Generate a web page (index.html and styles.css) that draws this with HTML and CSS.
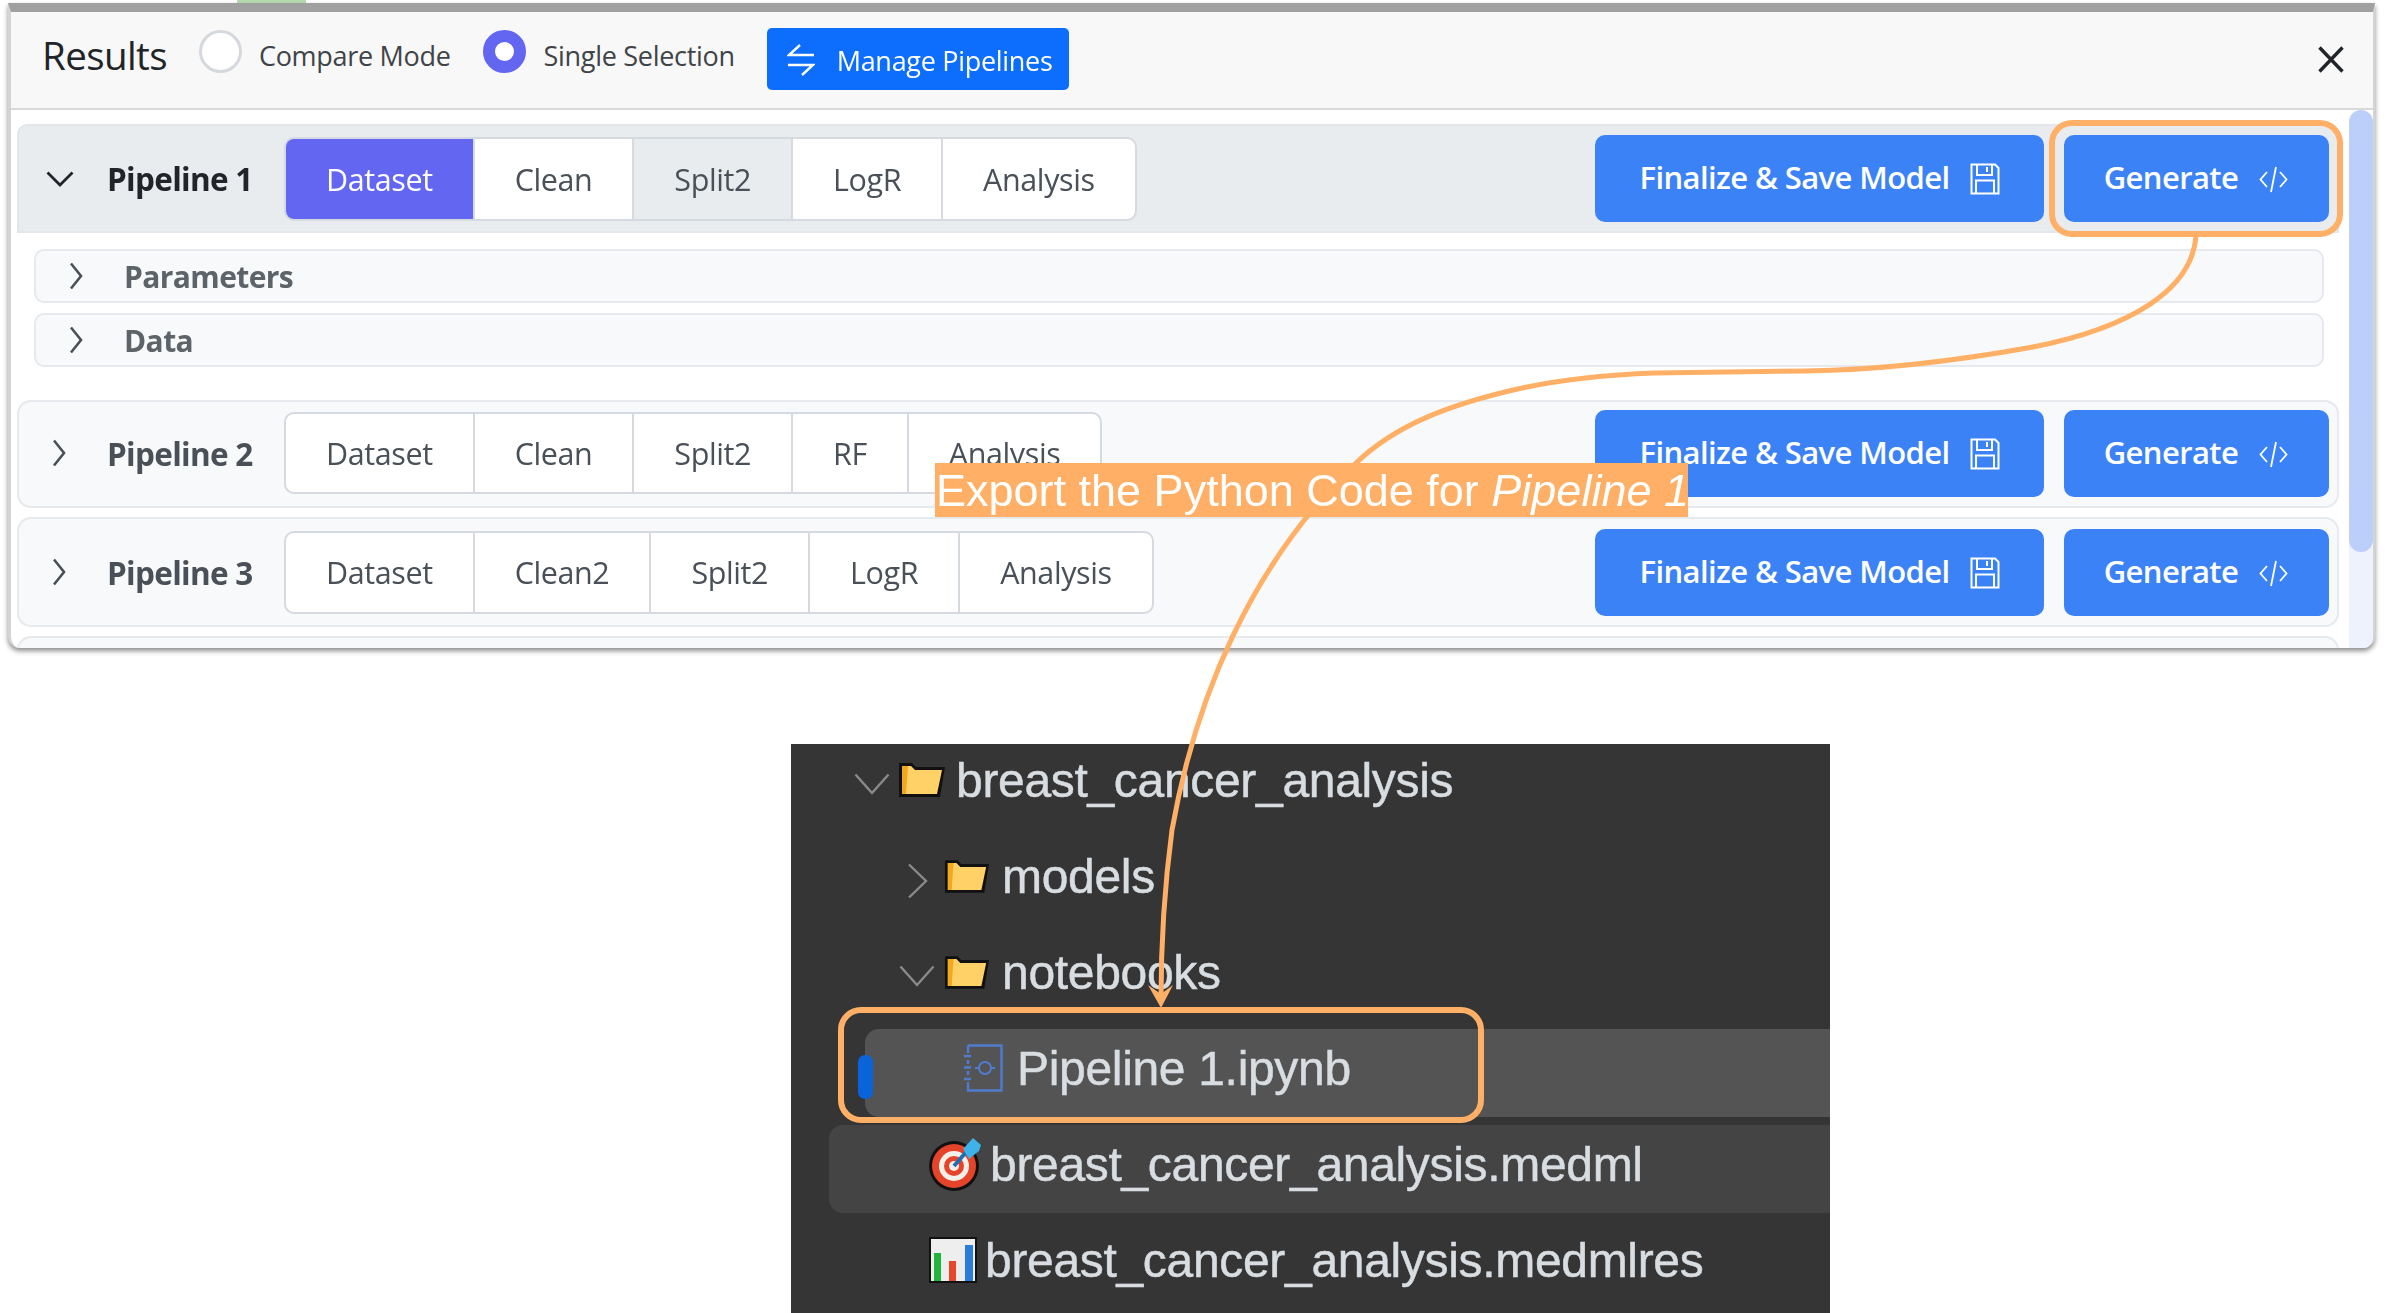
FILE: index.html
```html
<!DOCTYPE html>
<html lang="en">
<head>
<meta charset="utf-8">
<title>Results</title>
<link rel="stylesheet" href="styles.css">
</head>
<body>
<svg width="0" height="0" class="defs">
  <defs>
    <symbol id="save" viewBox="0 0 30 32"><path d="M1.5 1.5H25L28.5 5V30.5H1.5Z M7 1.5V12H22V1.5 M17 4V9 M6 30.5V17.5H24V30.5" fill="none" stroke="currentColor" stroke-width="2"/></symbol>
    <symbol id="code" viewBox="0 0 31 32"><path d="M9 9L2.5 16.5L9 24 M22 9L28.5 16.5L22 24 M18 4L13 29" fill="none" stroke="currentColor" stroke-width="1.8"/></symbol>
    <symbol id="chev-right" viewBox="0 0 14 28"><path d="M2 1.5L12 14L2 26.5" fill="none" stroke="currentColor" stroke-width="2.6"/></symbol>
    <symbol id="folder" viewBox="0 0 48 36"><path d="M1 1H14L18 5H47L42 35H1Z" fill="#111"/><path d="M4 4H13L17 8H44L39 32H4Z" fill="#ffd166"/><path d="M4 4H10L8 32H4Z" fill="#f2a81d"/></symbol>
  </defs>
</svg>

<div class="top-strip"><span class="top-tab"></span></div>
<section class="panel">
  <header class="panel-head">
    <h1 class="title">Results</h1>
    <label class="radio"><span class="dot"></span>Compare Mode</label>
    <label class="radio radio-second"><span class="dot dot-on"></span>Single Selection</label>
    <button class="manage">
      <svg class="manage-icon" viewBox="0 0 28 32"><path d="M13 1L2 11H27 M15 31L26 21H1" fill="none" stroke="currentColor" stroke-width="2.4"/></svg>
      Manage Pipelines
    </button>
    <svg class="close" viewBox="0 0 26 27"><path d="M1.5 1.5L24.5 25.5M24.5 1.5L1.5 25.5" fill="none" stroke="currentColor" stroke-width="3.4"/></svg>
  </header>
  <div class="panel-body">
    <div class="list">
      <article class="pipe pipe-open">
        <svg class="chev-down" viewBox="0 0 28 16"><path d="M1.5 1.5L14 14L26.5 1.5" fill="none" stroke="currentColor" stroke-width="2.8"/></svg>
        <span class="pipe-name">Pipeline 1</span>
        <div class="tabs">
          <span class="tab tab-active">Dataset</span><span class="tab">Clean</span><span class="tab tab-grey">Split2</span><span class="tab">LogR</span><span class="tab">Analysis</span>
        </div>
        <div class="actions">
          <button class="btn btn-save">Finalize &amp; Save Model<svg class="ico-save"><use href="#save"/></svg></button>
          <button class="btn btn-gen">Generate<svg class="ico-code"><use href="#code"/></svg></button>
        </div>
      </article>
      <div class="sub sub-first"><svg class="chev-sub"><use href="#chev-right"/></svg>Parameters</div>
      <div class="sub"><svg class="chev-sub"><use href="#chev-right"/></svg>Data</div>
      <article class="pipe pipe-two">
        <svg class="chev-right"><use href="#chev-right"/></svg>
        <span class="pipe-name">Pipeline 2</span>
        <div class="tabs">
          <span class="tab">Dataset</span><span class="tab">Clean</span><span class="tab">Split2</span><span class="tab">RF</span><span class="tab">Analysis</span>
        </div>
        <div class="actions">
          <button class="btn btn-save">Finalize &amp; Save Model<svg class="ico-save"><use href="#save"/></svg></button>
          <button class="btn btn-gen">Generate<svg class="ico-code"><use href="#code"/></svg></button>
        </div>
      </article>
      <article class="pipe pipe-three">
        <svg class="chev-right"><use href="#chev-right"/></svg>
        <span class="pipe-name">Pipeline 3</span>
        <div class="tabs">
          <span class="tab">Dataset</span><span class="tab">Clean2</span><span class="tab">Split2</span><span class="tab">LogR</span><span class="tab">Analysis</span>
        </div>
        <div class="actions">
          <button class="btn btn-save">Finalize &amp; Save Model<svg class="ico-save"><use href="#save"/></svg></button>
          <button class="btn btn-gen">Generate<svg class="ico-code"><use href="#code"/></svg></button>
        </div>
      </article>
      <div class="pipe-stub"></div>
    </div>
    <div class="track"><div class="thumb"></div></div>
  </div>
</section>

<section class="tree">
  <div class="row row-root">
    <svg class="tree-chev-down" viewBox="0 0 36 22"><path d="M1.5 1.5L18 20L34.5 1.5" fill="none" stroke="currentColor" stroke-width="2.4"/></svg>
    <svg class="folder"><use href="#folder"/></svg>
    <span>breast_cancer_analysis</span>
  </div>
  <div class="row row-sub">
    <span class="chev-slot"><svg class="tree-chev-right" viewBox="0 0 21 36"><path d="M2 1.5L19 18L2 34.5" fill="none" stroke="currentColor" stroke-width="2.4"/></svg></span>
    <svg class="folder folder-sm"><use href="#folder"/></svg>
    <span>models</span>
  </div>
  <div class="row row-sub">
    <span class="chev-slot"><svg class="tree-chev-down" viewBox="0 0 36 22"><path d="M1.5 1.5L18 20L34.5 1.5" fill="none" stroke="currentColor" stroke-width="2.4"/></svg></span>
    <svg class="folder folder-sm"><use href="#folder"/></svg>
    <span>notebooks</span>
  </div>
  <div class="row row-selected">
    <span class="indicator"></span>
    <svg class="nb" viewBox="0 0 39 48"><path d="M4 1.5H37.5V46.5H4V38 M4 31V27 M4 20V16 M4 9V1.5" fill="none" stroke="#4f7cd0" stroke-width="2.4"/><path d="M0 12H7M0 23.5H7M0 35H7" stroke="#4f7cd0" stroke-width="2.4"/><circle cx="21" cy="24" r="6" fill="none" stroke="#4f7cd0" stroke-width="2"/><path d="M11 24H15M27 24H31" stroke="#4f7cd0" stroke-width="2"/></svg>
    <span>Pipeline 1.ipynb</span>
  </div>
  <div class="row row-hover">
    <svg class="target" viewBox="0 0 52 54"><circle cx="25" cy="29" r="25" fill="#111"/><circle cx="25" cy="29" r="22" fill="#e5432a"/><circle cx="25" cy="29" r="15" fill="#f3efe9"/><circle cx="25" cy="29" r="10" fill="#e5432a"/><circle cx="25" cy="29" r="5" fill="#f3efe9"/><path d="M25 29L38 14" stroke="#1f6fb5" stroke-width="4"/><path d="M34 12L44 1L52 8L50 14L40 22Z" fill="#3fb2ea"/></svg>
    <span>breast_cancer_analysis.medml</span>
  </div>
  <div class="row row-plain">
    <svg class="chart" viewBox="0 0 48 46"><rect width="48" height="46" fill="#111"/><rect x="2" y="2" width="44" height="42" fill="#eeeeee"/><rect x="5" y="16" width="7" height="28" fill="#22b33c"/><rect x="20" y="24" width="7" height="20" fill="#e8472b"/><rect x="36" y="8" width="8" height="36" fill="#2a7dd8"/></svg>
    <span>breast_cancer_analysis.medmlres</span>
  </div>
</section>

<svg class="callouts" viewBox="0 0 2387 1313">
  <path class="callout-line" d="M2196 236C2192 290 2130 328 2033 347C1950 362 1880 370 1806 371C1750 372 1700 372 1654 373C1600 375 1560 380 1522 388C1450 404 1395 425 1355 464C1250 565 1195 700 1172 830C1164 890 1161 950 1161 1000"/>
  <path class="callout-head" d="M1148 985L1161 994L1173 985L1161 1008Z"/>
  <rect class="callout-box" x="2052" y="123" width="288" height="111" rx="20"/>
  <rect class="callout-box" x="841" y="1010" width="640" height="110" rx="20"/>
</svg>
<div class="callout-label">Export the Python Code for <em>Pipeline 1</em></div>
</body>
</html>
```

FILE: styles.css
```css
* { box-sizing: border-box; }
html, body { margin: 0; padding: 0; }
body {
  width: 2387px;
  height: 1313px;
  overflow: hidden;
  background: #fff;
  position: relative;
  font-family: "Open Sans", "Noto Sans", sans-serif;
}
.defs { position: absolute; }

.top-strip { height: 3px; padding-left: 237px; }
.top-tab { display: block; width: 69px; height: 3px; background: #b5dcae; }

.panel {
  margin: 0 12px 0 8px;
  height: 645px;
  display: flex;
  flex-direction: column;
  background: #fff;
  border-top: 9px solid #a0a0a0;
  border-left: 3px solid #d4d4d4;
  border-right: 2px solid #d4d4d4;
  border-radius: 0 0 12px 12px;
  box-shadow: 0 3px 5px rgba(0,0,0,.45);
  overflow: hidden;
  filter: blur(.4px);
}
.panel-head {
  height: 98px;
  flex: none;
  display: flex;
  align-items: center;
  background: #f8f8f8;
  border-bottom: 2px solid #d9d9d9;
  padding: 0 29px 0 31px;
}
.title { margin: 0 32px 10px 0; font-size: 38.5px; font-weight: 400; color: #212529; line-height: 1; letter-spacing: -.6px; }
.radio { display: flex; align-items: center; font-size: 27px; color: #3f4448; margin-bottom: 10px; letter-spacing: -.3px; }
.radio-second { margin-left: 32px; }
.dot { width: 43px; height: 43px; border-radius: 50%; background: #fff; border: 3px solid #d5d9dd; margin-right: 17px; margin-top: -8px; }
.dot-on { border: 12px solid #6366f1; margin-right: 18px; }
.manage {
  margin-left: 32px;
  width: 302px;
  height: 62px;
  display: flex;
  align-items: center;
  padding: 2px 0 0 20px;
  background: #0d6efd;
  color: #fff;
  border: 0;
  border-radius: 5px;
  font: 400 27px "Open Sans", sans-serif;
  letter-spacing: -.3px;
  margin-bottom: 2px;
}
.manage-icon { width: 28px; height: 32px; margin-right: 22px; }
.close { width: 26px; height: 27px; margin-left: auto; color: #212529; margin-bottom: 2px; }

.panel-body { flex: 1; min-height: 0; display: flex; }
.list { flex: 1; min-width: 0; padding: 14px 10px 0 6px; overflow: hidden; }
.track { width: 24px; background: #eef2fd; border-radius: 12px 12px 0 0; flex: none; }
.thumb { height: 442px; background: #bccffa; border-radius: 12px; }

.pipe {
  display: flex;
  align-items: center;
  background: #f8f9fa;
  border: 2px solid #e6e9ed;
  border-radius: 14px;
  height: 108px;
  padding: 0 8px 0 27px;
}
.pipe-open { height: 109px; background: #e9ecef; border-radius: 10px 10px 0 0; border-color: #e3e6ea; }
.pipe-two { margin-top: 33px; padding-bottom: 2px; }
.pipe-three { margin-top: 9px; height: 110px; }
.pipe-stub {
  margin-top: 9px;
  height: 40px;
  background: #f8f9fa;
  border: 2px solid #e6e9ed;
  border-radius: 14px 14px 0 0;
}
.chev-down { width: 28px; height: 16px; color: #212529; flex: none; margin-right: 33px; }
.chev-right { width: 14px; height: 28px; color: #495057; flex: none; margin: 0 41px 0 6px; }
.pipe-name { width: 177px; flex: none; font-size: 31.5px; font-weight: 700; color: #495057; letter-spacing: -.7px; white-space: nowrap; }
.pipe-open .pipe-name { color: #212529; }
.tabs {
  display: flex;
  height: 82px;
  border: 2px solid #d5d9e0;
  border-radius: 10px;
  background: #fff;
  overflow: hidden;
}
.pipe-open .tabs { height: 84px; }
.pipe-three .tabs { height: 83px; }
.tab {
  display: flex;
  align-items: center;
  padding: 0 40px;
  font-size: 30.5px;
  color: #495057;
  letter-spacing: -.4px;
  border-left: 2px solid #d5d9e0;
}
.tab:first-child { border-left: 0; }
.tab-active { background: #6366f1; color: #fff; }
.tab-grey { background: #e9ecef; }
.actions { margin-left: auto; display: flex; gap: 20px; }
.btn {
  height: 87px;
  display: flex;
  align-items: center;
  justify-content: center;
  background: #3b82f6;
  color: #fff;
  border: 0;
  border-radius: 10px;
  font: 600 31px "Open Sans", sans-serif;
  letter-spacing: -.6px;
  padding: 0 0 3px;
}
.btn-save { width: 449px; }
.btn-gen { width: 265px; }
.ico-save { width: 30px; height: 32px; margin-left: 20px; margin-top: 4px; flex: none; }
.ico-code { width: 31px; height: 32px; margin-left: 20px; margin-top: 4px; flex: none; }

.sub {
  margin: 0 15px 0 17px;
  height: 54px;
  display: flex;
  align-items: center;
  background: #f8f9fa;
  border: 2px solid #e6e9ed;
  border-radius: 10px;
  font-size: 30px;
  font-weight: 700;
  color: #5c6369;
  letter-spacing: -.6px;
  margin-top: 10px;
  padding-left: 33px;
}
.sub-first { margin-top: 16px; }
.chev-sub { width: 14px; height: 28px; margin-right: 41px; color: #495057; flex: none; }

.tree {
  margin: 96px 0 0 791px;
  width: 1039px;
  height: 569px;
  background: #353535;
  color: #d8dde2;
  font-family: "Liberation Sans", Arial, sans-serif;
  font-size: 48px;
  overflow: hidden;
  filter: blur(.5px);
}
.row {
  display: flex;
  align-items: center;
  height: 88px;
  margin-bottom: 8px;
  padding-bottom: 10px;
  letter-spacing: -.32px;
  position: relative;
  -webkit-text-stroke: .5px currentColor;
}
.row-root { margin-top: -3px; padding-left: 63px; gap: 8px; }
.row-root .folder { margin-left: 0; margin-right: 2px; }
.row-sub { padding-left: 108px; }
.chev-slot { width: 36px; display: flex; justify-content: center; margin-right: 9px; }
.tree-chev-down { width: 36px; height: 22px; color: #8a8a8a; margin-top: 8px; flex: none; }
.tree-chev-right { width: 21px; height: 36px; color: #8a8a8a; margin-top: 10px; flex: none; }
.folder { width: 48px; height: 36px; flex: none; margin-right: 8px; }
.folder-sm { width: 46px; height: 35px; margin-right: 12px; }
.row-selected { margin-left: 74px; padding-left: 99px; background: #545454; border-radius: 14px 0 0 14px; }
.indicator { position: absolute; left: -7px; top: 26px; width: 15px; height: 44px; background: #0a63d8; border-radius: 7px; }
.nb { width: 39px; height: 48px; margin-right: 14px; flex: none; }
.row-hover { margin-left: 38px; padding-left: 100px; background: #444; border-radius: 14px 0 0 14px; }
.target { width: 52px; height: 54px; margin-right: 9px; flex: none; }
.row-plain { padding-left: 138px; }
.chart { width: 48px; height: 46px; margin-right: 8px; flex: none; }

.callouts { position: absolute; left: 0; top: 0; width: 2387px; height: 1313px; pointer-events: none; }
.callout-line { fill: none; stroke: #ffb066; stroke-width: 5; }
.callout-head { fill: #ffb066; }
.callout-box { fill: none; stroke: #ffb066; stroke-width: 6; }
.callout-label {
  position: absolute;
  left: 935px;
  top: 463px;
  width: 753px;
  height: 54px;
  background: #ffb066;
  color: #fff;
  font: 400 45px/56px "Liberation Sans", Arial, sans-serif;
  padding-left: 1px;
  white-space: nowrap;
}
.callout-label em { font-style: italic; }
```
